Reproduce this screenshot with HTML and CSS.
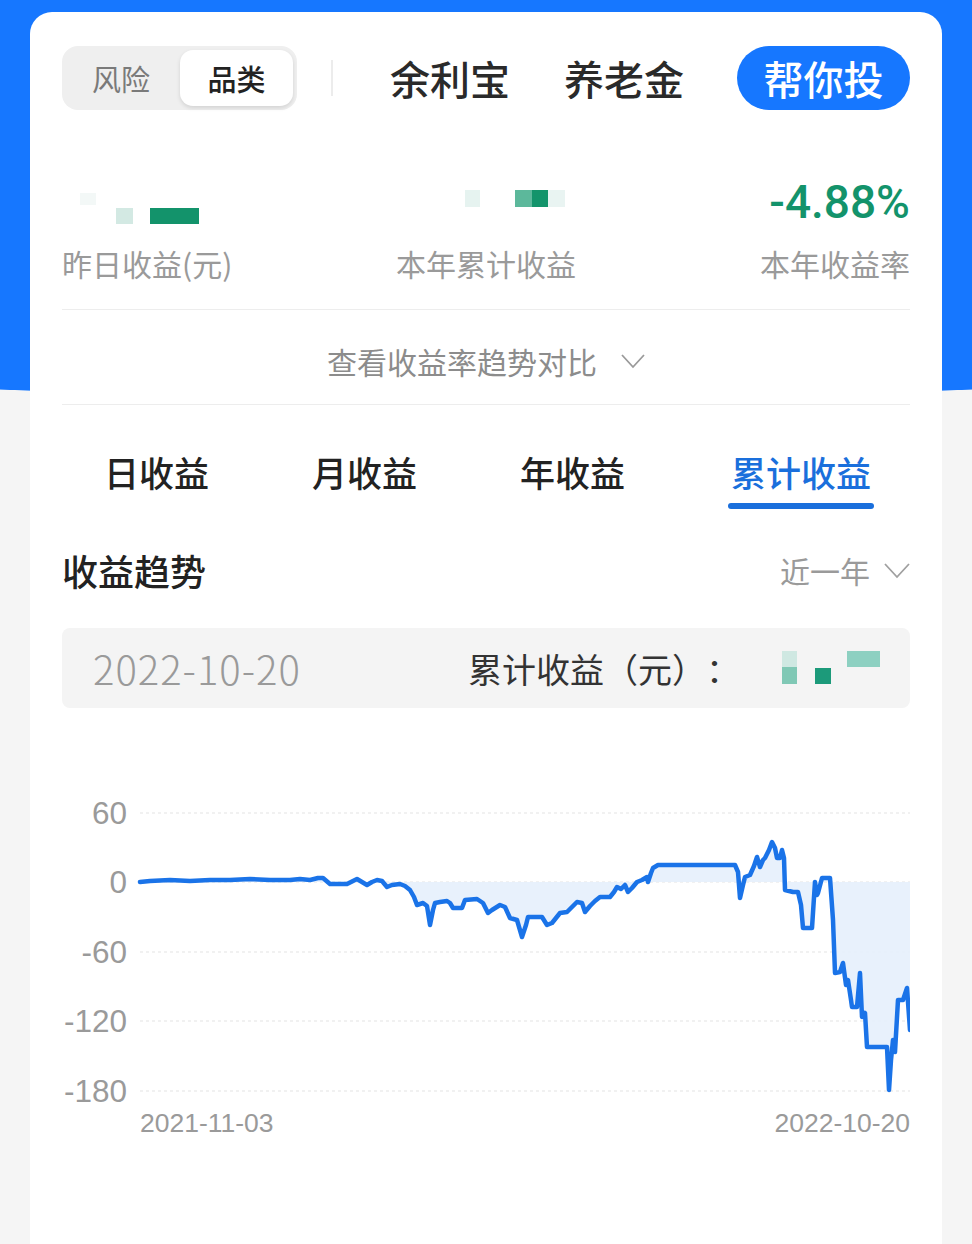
FILE: index.html
```html
<!DOCTYPE html>
<html lang="zh-CN">
<head>
<meta charset="utf-8">
<title>收益</title>
<link rel="stylesheet" href="styles.css">
</head>
<body>
<div class="card">
  <div class="top">
    <div class="seg">
      <div class="seg-item">风险</div>
      <div class="seg-item on">品类</div>
    </div>
    <div class="tick"></div>
    <div class="nav nav1">余利宝</div>
    <div class="nav nav2">养老金</div>
    <div class="btn">帮你投</div>
  </div>

  <div class="stats">
    <div class="stat stat-left">
      <div class="stat-val">
        <span class="blk b-faint"></span>
        <span class="blk b-light"></span>
        <span class="blk b-dark"></span>
      </div>
      <div class="stat-label">昨日收益(元)</div>
    </div>
    <div class="stat stat-mid">
      <div class="stat-val">
        <span class="blk m1"></span>
        <span class="blk m2"></span>
        <span class="blk m3"></span>
        <span class="blk m4"></span>
      </div>
      <div class="stat-label">本年累计收益</div>
    </div>
    <div class="stat stat-right">
      <div class="stat-val"><span class="pct">-4.88%</span></div>
      <div class="stat-label">本年收益率</div>
    </div>
  </div>

  <div class="divider"></div>
  <div class="compare">
    <span>查看收益率趋势对比</span>
    <svg class="chev" width="24" height="16" viewBox="0 0 24 16"><polyline points="1,2 12,14 23,2" fill="none" stroke="#9a9a9a" stroke-width="1.8"/></svg>
  </div>
  <div class="divider d2"></div>

  <div class="tabs">
    <div class="tab">日收益</div>
    <div class="tab">月收益</div>
    <div class="tab">年收益</div>
    <div class="tab on">累计收益</div>
  </div>

  <div class="sec">
    <div class="sec-title">收益趋势</div>
    <div class="range">
      <span>近一年</span>
      <svg width="26" height="17" viewBox="0 0 26 17"><polyline points="1,2 13,15 25,2" fill="none" stroke="#a0a0a0" stroke-width="1.8"/></svg>
    </div>
  </div>

  <div class="info">
    <div class="info-date">2022-10-20</div>
    <div class="info-right">
      <span class="info-label">累计收益（元）：</span>
      <span class="mosaic">
        <span class="q q1"></span><span class="q q2"></span><span class="q q3"></span><span class="q q4"></span>
      </span>
    </div>
  </div>

  <svg class="chart" viewBox="62 780 848 370" width="848" height="370">
    <g class="grid">
      <line x1="140" y1="813" x2="910" y2="813"/>
      <line x1="140" y1="882" x2="910" y2="882"/>
      <line x1="140" y1="952" x2="910" y2="952"/>
      <line x1="140" y1="1021" x2="910" y2="1021"/>
      <line x1="140" y1="1091" x2="910" y2="1091"/>
    </g>
    <g class="ylab">
      <text x="127" y="824">60</text>
      <text x="127" y="893">0</text>
      <text x="127" y="963">-60</text>
      <text x="127" y="1032">-120</text>
      <text x="127" y="1102">-180</text>
    </g>
    <path class="area" d="M140,882 L150,881 170,880 190,881 210,880 230,880 250,879 270,880 290,880 300,879 310,880 318,878 323,878 330,884 347,884 357,879 362,882 367,885 372,882 377,880 382,881 387,887 392,885 400,884 405,886 410,890 414,897 417,905 423,903 427,906 430,925 433,910 435,903 440,902 447,901 450,903 453,908 462,908 465,900 477,899 480,901 483,903 488,913 492,910 500,905 505,907 510,918 517,920 522,937 526,925 528,917 542,917 547,925 552,923 556,918 560,913 567,912 572,907 577,902 582,903 585,912 590,906 595,901 600,897 610,897 614,892 617,887 621,889 625,885 628,892 632,888 637,882 642,880 647,877 648,882 651,873 653,868 658,865 735,865 738,872 740,898 743,885 745,877 750,875 754,866 757,857 760,867 763,860 765,858 769,850 772,842 775,848 777,858 780,858 782,850 784,858 785,890 793,892 798,892 801,905 803,928 812,928 815,882 817,895 818,893 822,878 830,878 833,920 835,973 840,972 843,963 846,985 848,980 851,1000 852,1007 857,1007 860,973 862,1017 865,1013 867,1047 887,1047 889,1090 891,1060 893,1040 895,1052 898,1000 903,1000 907,988 910,1030 L910,882 Z"/>
    <polyline class="line" points="140,882 150,881 170,880 190,881 210,880 230,880 250,879 270,880 290,880 300,879 310,880 318,878 323,878 330,884 347,884 357,879 362,882 367,885 372,882 377,880 382,881 387,887 392,885 400,884 405,886 410,890 414,897 417,905 423,903 427,906 430,925 433,910 435,903 440,902 447,901 450,903 453,908 462,908 465,900 477,899 480,901 483,903 488,913 492,910 500,905 505,907 510,918 517,920 522,937 526,925 528,917 542,917 547,925 552,923 556,918 560,913 567,912 572,907 577,902 582,903 585,912 590,906 595,901 600,897 610,897 614,892 617,887 621,889 625,885 628,892 632,888 637,882 642,880 647,877 648,882 651,873 653,868 658,865 735,865 738,872 740,898 743,885 745,877 750,875 754,866 757,857 760,867 763,860 765,858 769,850 772,842 775,848 777,858 780,858 782,850 784,858 785,890 793,892 798,892 801,905 803,928 812,928 815,882 817,895 818,893 822,878 830,878 833,920 835,973 840,972 843,963 846,985 848,980 851,1000 852,1007 857,1007 860,973 862,1017 865,1013 867,1047 887,1047 889,1090 891,1060 893,1040 895,1052 898,1000 903,1000 907,988 910,1030"/>
    <g class="xlab">
      <text x="140" y="1132">2021-11-03</text>
      <text x="910" y="1132" text-anchor="end">2022-10-20</text>
    </g>
  </svg>
</div>
</body>
</html>
```

FILE: styles.css
```css
* { box-sizing: border-box; margin: 0; padding: 0; }
html, body { height: 100%; }
body {
  font-family: "Noto Sans CJK SC", "Noto Sans", sans-serif;
  background-color: #f5f5f5;
  background-image: radial-gradient(2303px 402px at 50% -3px, #1677ff 99.8%, rgba(22, 119, 255, 0) 100%);
  background-repeat: no-repeat;
  overflow: hidden;
  text-spacing-trim: space-all;
}

.card {
  margin: 12px 30px 0;
  height: 1232px;
  background: #fff;
  border-radius: 22px 22px 0 0;
  padding: 34px 32px 0;
}

/* top row */
.top { display: flex; align-items: center; height: 64px; }
.seg {
  width: 235px; height: 64px;
  background: #efefef;
  border-radius: 16px;
  display: flex; align-items: center;
  padding: 4px 4px 4px 0;
}
.seg-item {
  width: 118px;
  text-align: center;
  font-size: 29px;
  color: #7a7a7a;
}
.seg-item.on {
  width: 113px; height: 56px;
  background: #fff;
  border-radius: 13px;
  box-shadow: 0 2px 4px rgba(0, 0, 0, 0.12);
  color: #222;
  font-weight: 500;
  display: flex; align-items: center; justify-content: center;
}
.tick { width: 2px; height: 36px; background: #ececec; margin-left: 34px; }
.nav { font-size: 40px; font-weight: 500; color: #2a2a2a; line-height: 1; }
.nav1 { margin-left: 57px; }
.nav2 { margin-left: 54px; }
.btn {
  margin-left: auto;
  width: 173px; height: 64px;
  border-radius: 32px;
  background: #1677ff;
  color: #fff;
  font-size: 40px; font-weight: 500;
  display: flex; align-items: center; justify-content: center;
}

/* stats */
.stats { display: grid; grid-template-columns: 1fr 1fr 1fr; margin-top: 67px; }
.stat { display: flex; flex-direction: column; }
.stat-mid { align-items: center; }
.stat-right { align-items: flex-end; }
.stat-val { height: 50px; display: flex; width: 100%; }
.stat-right .stat-val { justify-content: flex-end; }
.stat-label { margin-top: 18px; font-size: 30px; line-height: 36px; color: #9a9a9a; }
.pct {
  font-family: Roboto, "Liberation Sans", sans-serif;
  font-size: 46px; font-weight: 500; line-height: 50px;
  color: #13936b;
}
.blk { display: block; }
.b-faint { width: 16px; height: 12px; background: #f3f8f7; margin: 16px 0 0 18px; }
.b-light { width: 17px; height: 16px; background: #d3e9e3; margin: 31px 0 0 20px; }
.b-dark { width: 49px; height: 16px; background: #13936b; margin: 31px 0 0 17px; }
.m1 { width: 15px; height: 17px; background: #e6f3f0; margin: 13px 0 0 120px; }
.m2 { width: 17px; height: 17px; background: #5cb89b; margin: 13px 0 0 35px; }
.m3 { width: 16px; height: 17px; background: #13946b; margin-top: 13px; }
.m4 { width: 17px; height: 17px; background: #e9f4f2; margin-top: 13px; }

.divider { height: 1px; background: #ededed; margin-top: 28px; }
.d2 { margin-top: 0; }
.compare {
  height: 94px; padding-top: 8px;
  display: flex; align-items: center; justify-content: center; gap: 24px;
  font-size: 30px; color: #8c8c8c;
}

/* tabs */
.tabs { display: flex; align-items: flex-start; padding-left: 42px; gap: 103px; margin-top: 45px; }
.tab {
  font-size: 35px; line-height: 44px; font-weight: 500; color: #222;
  display: flex; flex-direction: column; align-items: center;
}
.tab.on { color: #1a6fdc; }
.tab.on::after {
  content: "";
  width: 146px; height: 6px; border-radius: 3px;
  background: #1a6fdc;
  margin-top: 9px;
}

.sec { display: flex; justify-content: space-between; align-items: center; height: 44px; margin-top: 39px; }
.sec-title { font-size: 36px; font-weight: 500; color: #222; }
.range { display: flex; align-items: center; gap: 14px; font-size: 30px; color: #9a9a9a; }

/* info */
.info {
  margin-top: 36px; height: 80px;
  background: #f4f4f4; border-radius: 8px;
  display: flex; align-items: center; justify-content: space-between;
  padding: 0 30px 0 31px;
}
.info-date { font-size: 40px; font-weight: 300; letter-spacing: 1px; color: #9a9a9a; }
.info-right { display: flex; align-items: center; }
.info-label { font-size: 34px; color: #333; text-spacing-trim: space-all; }
.mosaic { position: relative; display: block; width: 98px; height: 34px; margin-left: 42px; }
.q { position: absolute; display: block; }
.q1 { left: 0; top: 0; width: 15px; height: 16px; background: #cfe8e2; }
.q2 { left: 0; top: 16px; width: 15px; height: 17px; background: #80c8b5; }
.q3 { left: 33px; top: 17px; width: 16px; height: 16px; background: #1c9a7a; }
.q4 { left: 65px; top: 0; width: 33px; height: 16px; background: #8dd0c1; }

/* chart */
.chart { display: block; margin-top: 72px; }
.grid line { stroke: #e4e4e4; stroke-width: 1.2; stroke-dasharray: 3 3; }
.ylab text { font-family: "Liberation Sans", Arial, sans-serif; font-size: 31.5px; fill: #9a9a9a; text-anchor: end; }
.xlab text { font-family: "Liberation Sans", Arial, sans-serif; font-size: 26.5px; fill: #9a9a9a; }
.area { fill: #e6f0fc; opacity: 0.9; }
.line { fill: none; stroke: #1a73e8; stroke-width: 4.5; stroke-linejoin: round; stroke-linecap: round; }
```
